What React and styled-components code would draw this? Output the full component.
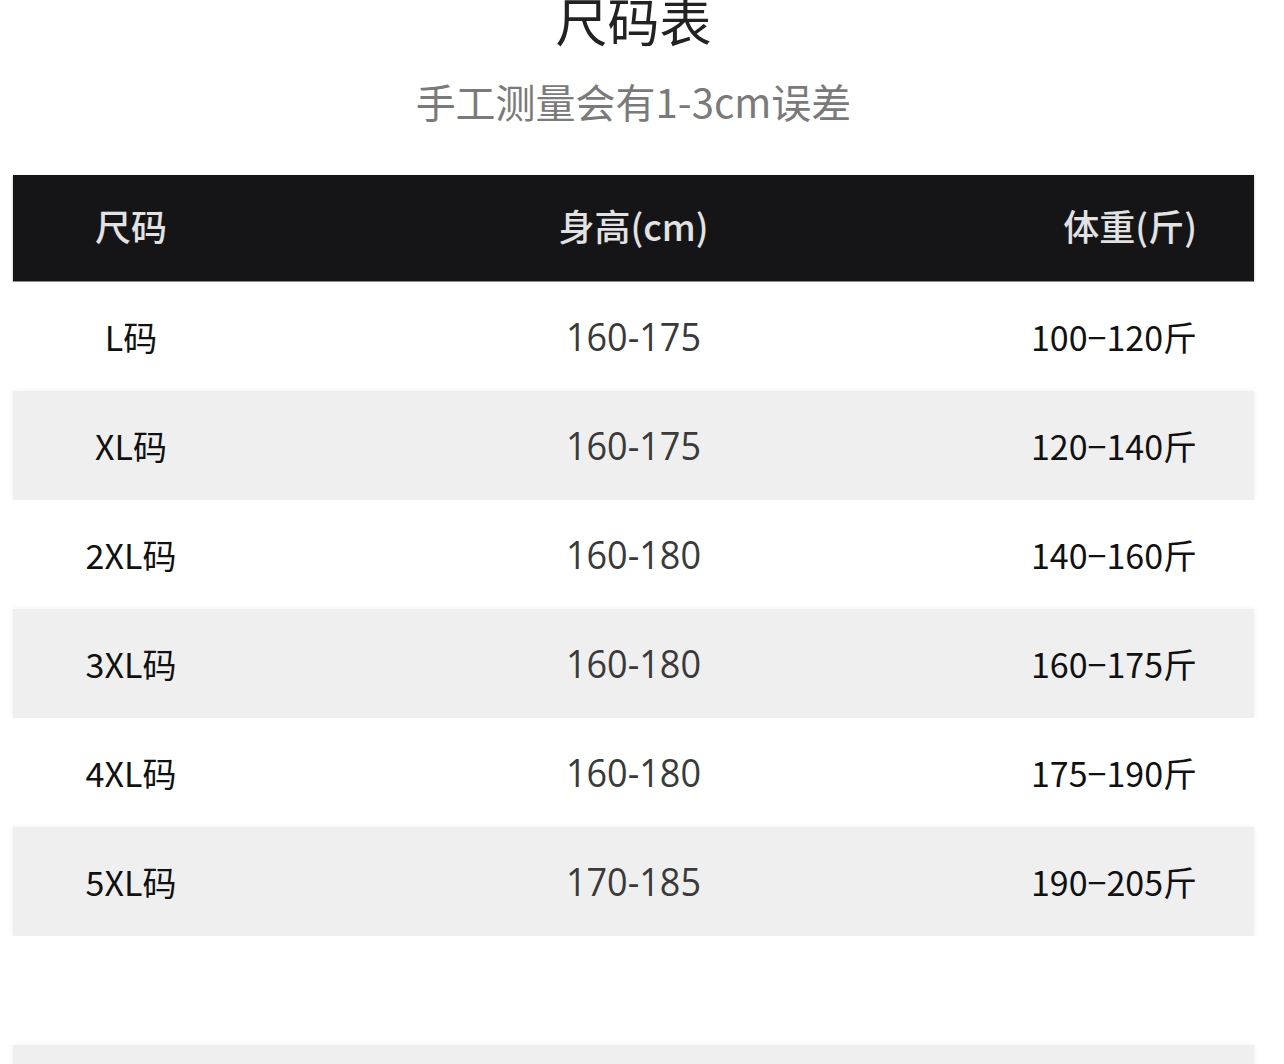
import React from "react";
import styled, { createGlobalStyle } from "styled-components";

const Global = createGlobalStyle`
  html, body { margin: 0; padding: 0; background: #ffffff; }
  body { font-family: "Noto Sans CJK SC", "Noto Sans", sans-serif; overflow: hidden; }
`;

const Page = styled.div`
  width: 1241px;
  margin: 0 0 0 13px;
  display: flex;
  flex-direction: column;
  align-items: stretch;
`;

const Title = styled.h1`
  margin: -6px 0 0;
  font-size: 52px;
  line-height: 52px;
  font-weight: 400;
  color: #222;
  text-align: center;
`;

const Subtitle = styled.p`
  margin: 35px 0 0;
  font-size: 40px;
  line-height: 40px;
  color: #7a7a7a;
  text-align: center;
`;

const Table = styled.div`
  margin-top: 54px;
  display: flex;
  flex-direction: column;
`;

const Row = styled.div`
  display: grid;
  grid-template-columns: 236px 1fr 236px;
  align-items: center;
  height: ${(p) => (p.$head ? 107 : 109)}px;
  padding-bottom: ${(p) => (p.$head ? 6 : 0)}px;
  background: ${(p) => (p.$head ? "#151518" : p.$shade ? "#efefef" : "#ffffff")};
  box-shadow: ${(p) =>
    p.$head
      ? "0 1px 2px rgba(0,0,0,0.35)"
      : p.$shade
      ? "0 0 5px rgba(0,0,0,0.07)"
      : "none"};
  border-bottom: ${(p) => (p.$head ? "1px solid #8a8a8a" : "none")};
  box-sizing: border-box;
`;

const Cell = styled.div`
  font-size: ${(p) => (p.$head ? 36 : 34)}px;
  line-height: 1;
  font-weight: ${(p) => (p.$head ? 500 : 400)};
  color: ${(p) => (p.$head ? "#e2e2e2" : p.$mid ? "#3a3a3a" : "#111")};
  text-align: ${(p) => p.$align || "center"};
  padding-right: ${(p) => (p.$align === "right" ? 57 : 0)}px;
  font-family: ${(p) =>
    p.$mid && !p.$head
      ? `"Open Sans", "Noto Sans CJK SC", sans-serif`
      : `"Noto Sans CJK SC", "Noto Sans", sans-serif`};
  ${(p) => (p.$mid && !p.$head ? "font-size: 36px; transform: scaleY(1.08); font-weight: 500;" : "")}
  white-space: nowrap;
`;

const rows = [
  ["L码", "160-175", "100−120斤"],
  ["XL码", "160-175", "120−140斤"],
  ["2XL码", "160-180", "140−160斤"],
  ["3XL码", "160-180", "160−175斤"],
  ["4XL码", "160-180", "175−190斤"],
  ["5XL码", "170-185", "190−205斤"],
  ["", "", ""],
  ["", "", ""],
];

export default function App() {
  return (
    <>
      <Global />
      <Page>
        <Title>尺码表</Title>
        <Subtitle>手工测量会有1-3cm误差</Subtitle>
        <Table>
          <Row $head>
            <Cell $head>尺码</Cell>
            <Cell $head $mid>身高(cm)</Cell>
            <Cell $head $align="right">体重(斤)</Cell>
          </Row>
          {rows.map((r, i) => (
            <Row key={i} $shade={i % 2 === 1}>
              <Cell>{r[0]}</Cell>
              <Cell $mid>{r[1]}</Cell>
              <Cell $align="right">{r[2]}</Cell>
            </Row>
          ))}
        </Table>
      </Page>
    </>
  );
}
